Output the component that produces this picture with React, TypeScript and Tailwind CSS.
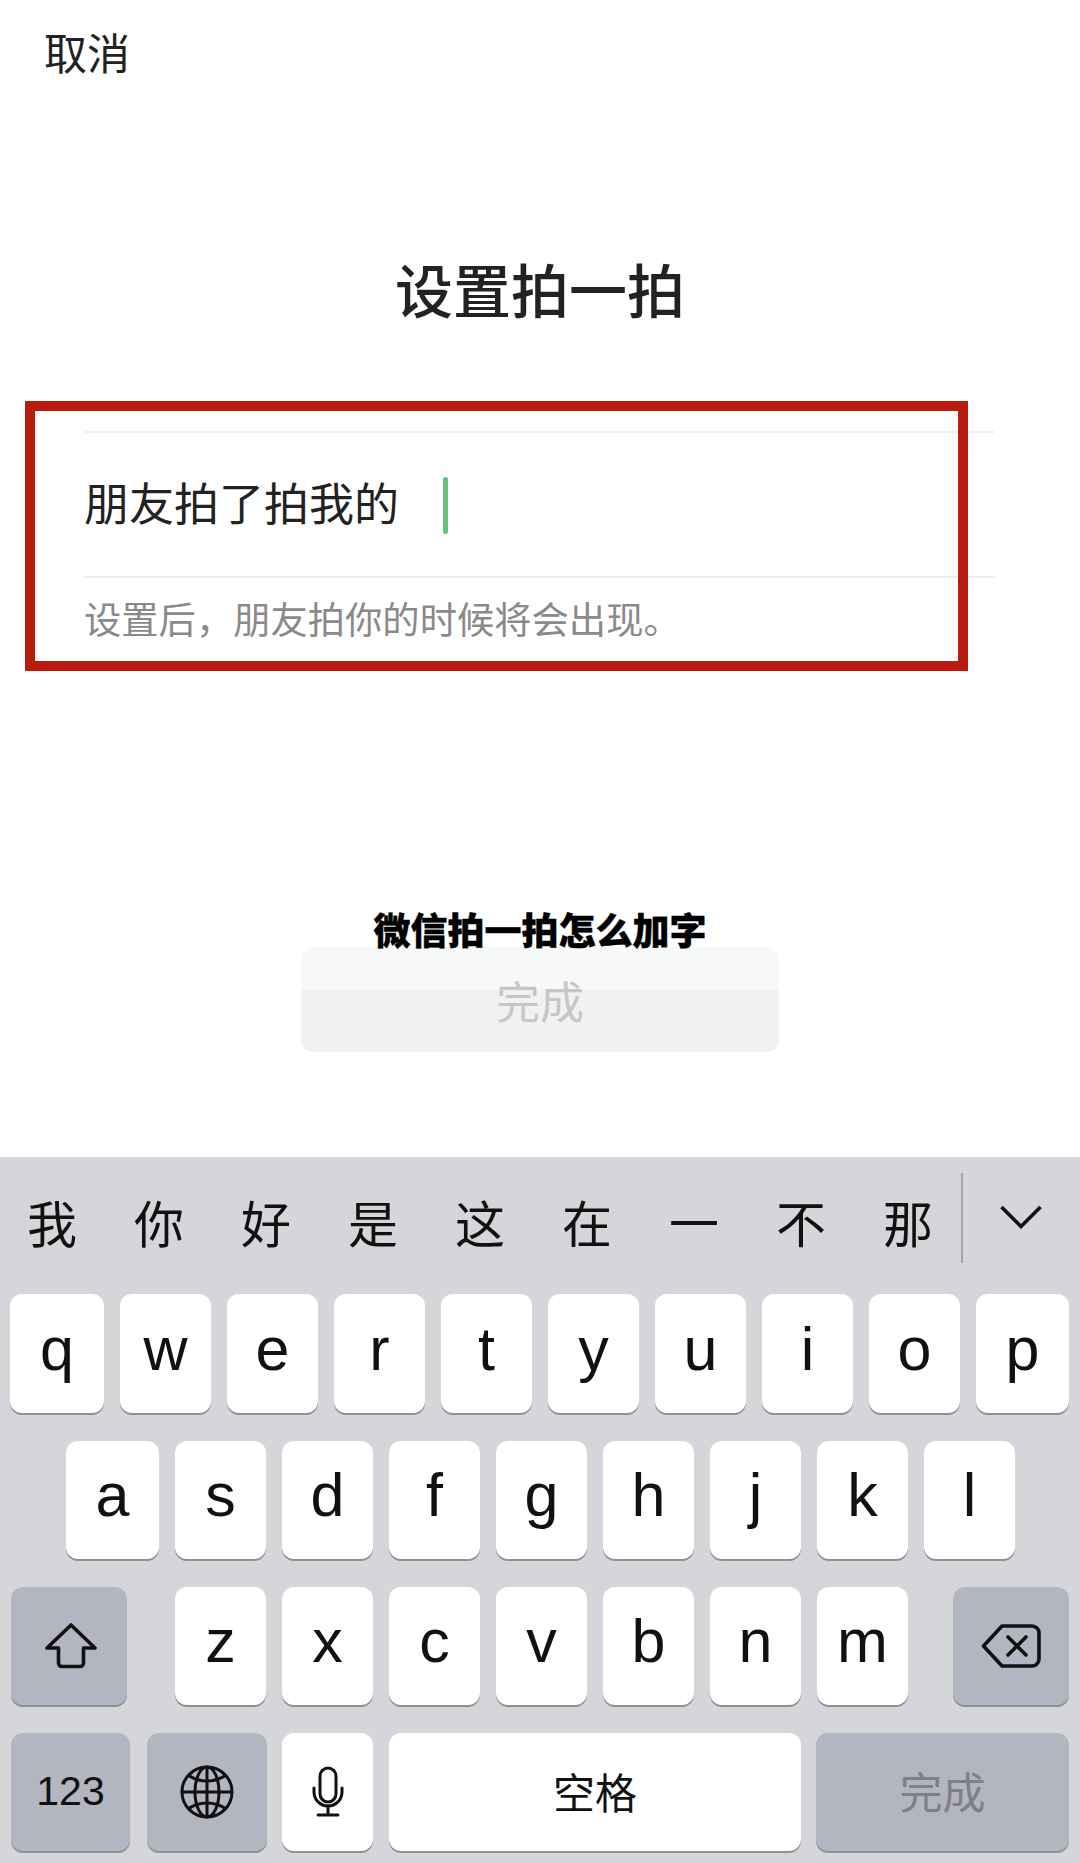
import React from "react";

const keyBase = "flex items-center justify-center rounded-[12px] shadow-[0_2px_0_#8e9096]";

function Letter({ c, cls = "w-[91px]" }: { c: string; cls?: string }) {
  return (
    <div className={`${keyBase} ${cls} h-full bg-white text-[61px] leading-none text-[#111] pb-[9px]`}>{c}</div>
  );
}

function Shift() {
  return (
    <svg className="ml-[4px]" width="54" height="48" viewBox="0 0 54 48" fill="none" stroke="#111" strokeWidth="3.6" strokeLinejoin="round">
      <path d="M27 3 L3 26 H14.5 V41 a3.5 3.5 0 0 0 3.5 3.5 H36 a3.5 3.5 0 0 0 3.5-3.5 V26 H51 Z" />
    </svg>
  );
}

function Backspace() {
  return (
    <svg width="60" height="46" viewBox="0 0 60 46" fill="none" stroke="#111" strokeWidth="3.6" strokeLinejoin="round" strokeLinecap="round">
      <path d="M21 3 H51 a7 7 0 0 1 7 7 V36 a7 7 0 0 1-7 7 H21 L2.5 23 Z" />
      <path d="M27 14 L45 32 M45 14 L27 32" />
    </svg>
  );
}

function Globe() {
  return (
    <svg width="56" height="56" viewBox="0 0 56 56" fill="none" stroke="#111" strokeWidth="3">
      <circle cx="28" cy="28" r="25" />
      <ellipse cx="28" cy="28" rx="12" ry="25" />
      <path d="M28 3 V53 M3 28 H53" />
      <path d="M9 11 C20 19 36 19 47 11 M9 45 C20 37 36 37 47 45" />
    </svg>
  );
}

function Mic() {
  return (
    <svg width="32" height="52" viewBox="0 0 32 52" fill="none" stroke="#111" strokeWidth="3" strokeLinecap="round">
      <rect x="8" y="2" width="16" height="34" rx="8" />
      <path d="M2 22 V26 a14 14 0 0 0 28 0 V22" />
      <path d="M16 40 V49 M6 49 H26" />
    </svg>
  );
}

export default function App() {
  const row1 = "wertyuio".split("");
  const row2 = "sdfghjkl".split("");
  const row3 = "zxcvbnm".split("");
  const cands = ["我", "你", "好", "是", "这", "在", "一", "不", "那"];
  return (
    <div className="w-[1080px] h-[1863px] flex flex-col bg-white overflow-hidden font-['Liberation_Sans','Noto_Sans_CJK_SC',sans-serif]">
      <div className="pt-[34px] pl-[44px] text-[43px] leading-[43px] text-[#222]">取消</div>
      <h1 className="mt-[187px] text-center text-[58px] leading-[58px] font-medium text-[#222]">设置拍一拍</h1>

      <section className="relative mt-[109px] ml-[84px] w-[911px]">
        <div className="border-t-2 border-[#f0f0f0] h-[145px] flex items-center pt-[2px]">
          <span className="text-[45px] leading-[45px] text-[#222]">朋友拍了拍我的</span>
          <span className="ml-[44px] w-[5px] h-[57px] rounded-full bg-[#6abf7a]" />
        </div>
        <div className="border-t-2 border-[#ececec] pt-[25px] text-[37.3px] leading-[37px] text-[#8a8a8a]">
          设置后，朋友拍你的时候将会出现。
        </div>
        <div className="absolute left-[-59px] top-[-30px] w-[943px] h-[270px] border-[10px] border-[#b71c0e]" />
      </section>

      <div className="relative z-10 mt-[272px] h-[35px] pt-[2px] text-center text-[37px] leading-[37px] font-black text-black [-webkit-text-stroke:0.4px_black]">微信拍一拍怎么加字</div>
      <div className="relative mx-auto w-[478px] h-[105px] pt-[8px] rounded-[12px] bg-[linear-gradient(#f7f8f8_41%,#f1f1f1_41%)] flex items-center justify-center text-[44px] leading-[44px] text-[#c6c6c6]">
        完成
      </div>

      <div className="mt-[105px] flex-1 bg-[#d4d6da] flex flex-col">
        <div className="mt-[16px] h-[90px] flex items-center pl-[2px]">
          <div className="flex gap-[7px] pt-[16px]">
            {cands.map((c) => (
              <div key={c} className="w-[100px] text-center text-[50px] leading-[50px] text-[#111]">{c}</div>
            ))}
          </div>
          <div className="ml-[3px] w-[2px] h-[90px] bg-[#a3a5aa]" />
          <svg className="ml-[37px] mb-[2px]" width="42" height="24" viewBox="0 0 42 24" fill="none" stroke="#111" strokeWidth="3.6">
            <path d="M1.5 2 L21 21.5 L40.5 2" />
          </svg>
        </div>

        <div className="mt-[31px] h-[119px] flex gap-[16px] pl-[10px]">
          <Letter c="q" cls="w-[94px]" />
          {row1.map((c) => <Letter key={c} c={c} />)}
          <Letter c="p" cls="w-[93px]" />
        </div>

        <div className="mt-[28px] h-[118px] flex gap-[16px] pl-[66px]">
          <Letter c="a" cls="w-[93px]" />
          {row2.map((c) => <Letter key={c} c={c} />)}
        </div>

        <div className="mt-[28px] h-[118px] flex pl-[11px]">
          <div className={`${keyBase} w-[116px] h-full bg-[#b3b5c0] mr-[48px]`}><Shift /></div>
          <div className="flex gap-[16px]">
            {row3.map((c) => <Letter key={c} c={c} />)}
          </div>
          <div className={`${keyBase} w-[116px] h-full bg-[#b3b5c0] ml-[45px]`}><Backspace /></div>
        </div>

        <div className="mt-[28px] h-[118px] flex pl-[11px]">
          <div className={`${keyBase} w-[119px] h-full bg-[#b3b5c0] text-[41px] text-[#111]`}>123</div>
          <div className={`${keyBase} w-[120px] h-full bg-[#b3b5c0] ml-[17px]`}><Globe /></div>
          <div className={`${keyBase} w-[91px] h-full bg-white ml-[15px]`}><Mic /></div>
          <div className={`${keyBase} w-[412px] h-full bg-white ml-[16px] pt-[4px] text-[42px] text-[#111]`}>空格</div>
          <div className={`${keyBase} w-[253px] h-full bg-[#b3b5c0] ml-[15px] pt-[4px] text-[43px] text-[#7e7f87]`}>完成</div>
        </div>
      </div>
    </div>
  );
}
